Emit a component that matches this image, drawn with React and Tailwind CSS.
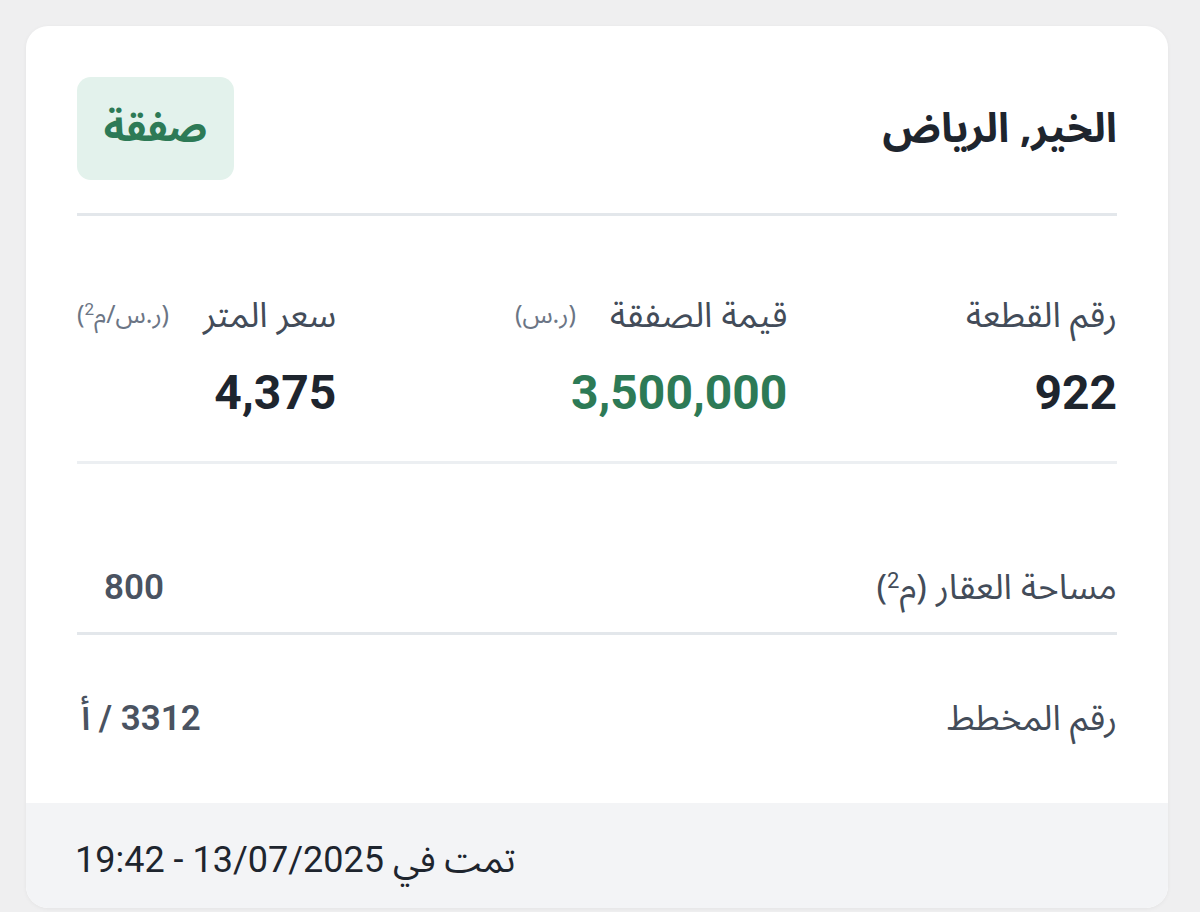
import React from 'react';

// Transaction card (RTL)
const Stat = ({ label, unit, value, green }) => (
  <div className="flex flex-col">
    <div className="h-[40px] flex items-center gap-[34px]">
      <span className="text-[35px] text-[#434c59]">{label}</span>
      {unit && <span className="text-[25px] text-[#6b7585]">{unit}</span>}
    </div>
    <div
      className={
        "mt-[33px] h-[48px] leading-[48px] text-[48px] font-bold font-['Roboto',sans-serif] " +
        (green ? "text-[#2d7a56]" : "text-[#1e252e]")
      }
    >
      {value}
    </div>
  </div>
);

const InfoRow = ({ label, value, valueClass, last }) => (
  <div
    className={
      "flex items-center justify-between pt-[64px] pb-[24px] " +
      (last ? "" : "border-b-[3px] border-[#e3e7eb]")
    }
  >
    <span className="h-[40px] leading-[40px] text-[35px] text-[#434c59]">{label}</span>
    <span
      className={
        "w-[128px] h-[40px] leading-[40px] text-center text-[35px] font-semibold text-[#4a5361] font-['Roboto','Noto_Sans_Arabic',sans-serif] " +
        (valueClass || "")
      }
    >
      {value}
    </span>
  </div>
);

export default function App() {
  return (
    <div
      dir="rtl"
      className="min-h-screen bg-[#efeff0] pt-[26px] pl-[26px] pr-[32px] font-['Noto_Sans_Arabic','Noto_Sans','DejaVu_Sans',sans-serif]"
    >
      <div className="bg-white rounded-[22px] shadow-[0_1px_4px_rgba(0,0,0,0.05)] overflow-hidden">
        <div className="px-[51px] pt-[51px] pb-[40px]">
          {/* header */}
          <div className="flex items-center justify-between pb-[33px] border-b-[3px] border-[#e3e7eb]">
            <h1 className="text-[41px] leading-[48px] font-bold text-[#1e252e]">الخير, الرياض</h1>
            <span className="w-[157px] h-[103px] rounded-[14px] bg-[#e3f2ec] flex items-center justify-center text-[40px] font-bold text-[#2d7a56]">
              صفقة
            </span>
          </div>

          {/* main figures */}
          <div className="flex justify-between pt-[80px] pb-[44px] border-b-[3px] border-[#eceff2]">
            <Stat label="رقم القطعة" value="922" />
            <Stat label="قيمة الصفقة" unit="(ر.س)" value="3,500,000" green />
            <Stat
              label="سعر المتر"
              unit={<>(ر.س/م<sup className="text-[17px] font-['Roboto',sans-serif]">2</sup>)</>}
              value="4,375"
            />
          </div>

          {/* details */}
          <div className="mt-[40px]">
            <InfoRow
              label={<>مساحة العقار (م<sup className="text-[22px] font-['Roboto',sans-serif]">2</sup>)</>}
              value="800"
              valueClass="pr-[14px]"
            />
            <InfoRow label="رقم المخطط" value="3312 / أ" last />
          </div>
        </div>

        {/* footer */}
        <div className="h-[105px] bg-[#f3f4f6] px-[49px] pt-[8px] flex items-center justify-end">
          <span className="text-[36px] text-[#1e252e] font-['Roboto','Noto_Sans_Arabic',sans-serif]">
            تمت في 13/07/2025 - 19:42
          </span>
        </div>
      </div>
    </div>
  );
}
